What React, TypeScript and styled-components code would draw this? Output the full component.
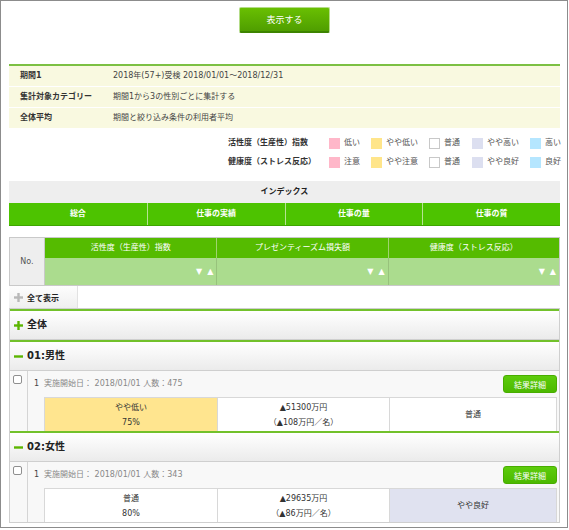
import React from "react";
import styled, { createGlobalStyle } from "styled-components";

const GlobalStyle = createGlobalStyle`
  html, body { margin: 0; padding: 0; background: #fff; }
  body {
    font-family: "DejaVu Sans", "Noto Sans CJK JP", sans-serif;
    color: #333;
  }
  * { box-sizing: border-box; }
`;

const Frame = styled.div`
  width: 568px;
  height: 528px;
  border: 1px solid #8c8c8c;
  padding: 6px 7px 0 8px;
  overflow: hidden;
  font-size: 8px;
  line-height: 1.2;
`;

const ButtonBar = styled.div`
  display: flex;
  justify-content: center;
  margin-bottom: 31px;
`;

const PrimaryButton = styled.button`
  width: 91px;
  height: 26px;
  border: 1px solid #b4dc88;
  border-bottom: 2px solid #3d8400;
  border-radius: 2px;
  background: linear-gradient(#69bf02, #4f9e00);
  color: #fff;
  font-family: inherit;
  font-size: 9px;
  padding: 0;
  cursor: pointer;
`;

const InfoTable = styled.div`
  border-top: 2px solid #7cc043;
  background: #f9f9e0;
`;

const InfoRow = styled.div`
  display: grid;
  grid-template-columns: 104px 1fr;
  align-items: center;
  height: 21px;
  border-bottom: 1px solid #fff;
  &:last-child {
    height: 20px;
    border-bottom: 0;
  }
`;

const InfoLabel = styled.div`
  padding-left: 11px;
  font-weight: bold;
  color: #333;
`;

const InfoValue = styled.div`
  color: #444;
`;

const Legend = styled.div`
  display: grid;
  grid-template-columns: 101px 42px 58px 43px 58px 30px;
  grid-auto-rows: 18px;
  row-gap: 1px;
  justify-content: end;
  align-items: center;
  margin: 6px 0 10px;
`;

const LegendTitle = styled.div`
  font-weight: bold;
  color: #333;
  white-space: nowrap;
`;

const LegendItem = styled.div`
  display: flex;
  align-items: center;
  gap: 4px;
  color: #555;
  white-space: nowrap;
`;

const Swatch = styled.span<{ $color: string; $bordered?: boolean }>`
  flex: none;
  width: 11px;
  height: 11px;
  background: ${(p) => p.$color};
  border: 1px solid ${(p) => (p.$bordered ? "#c8c8c8" : p.$color)};
`;

const IndexTitle = styled.div`
  height: 22px;
  line-height: 22px;
  background: #eeeeee;
  text-align: center;
  font-weight: bold;
  color: #222;
`;

const IndexRow = styled.div`
  display: grid;
  grid-template-columns: repeat(4, 1fr);
  height: 23px;
  background: #4dc300;
  border-bottom: 1px solid #3ea500;
`;

const IndexCell = styled.div`
  display: flex;
  align-items: center;
  justify-content: center;
  color: #fff;
  font-weight: bold;
  & + & {
    border-left: 1px solid #b6e394;
  }
`;

const FilterTable = styled.div`
  margin-top: 11px;
  display: grid;
  grid-template-columns: 35px repeat(3, 1fr);
  grid-template-rows: 20px 27px;
  border: 1px solid #c9c9c9;
`;

const NoCell = styled.div`
  grid-row: span 2;
  display: flex;
  align-items: center;
  justify-content: center;
  background: #eeeeee;
  border-right: 1px solid #c9c9c9;
  color: #555;
`;

const HeadCell = styled.div`
  display: flex;
  align-items: center;
  justify-content: center;
  background: #55bb00;
  color: #fff;
  & + & {
    border-left: 1px solid #9fd46f;
  }
`;

const SortCell = styled.div`
  display: flex;
  align-items: center;
  justify-content: flex-end;
  gap: 5px;
  padding-right: 3px;
  background: #abdc8e;
  color: #fff;
  font-size: 8px;
  & + & {
    border-left: 1px solid #98c27c;
  }
`;

const ShowAllButton = styled.button`
  display: flex;
  align-items: center;
  gap: 4px;
  width: 69px;
  height: 22px;
  margin: 0;
  padding: 0 0 0 5px;
  border: 0;
  border-right: 1px solid #e2e2e2;
  background: linear-gradient(#fdfdfd, #efefef);
  font-family: inherit;
  font-size: 8px;
  font-weight: bold;
  color: #222;
`;

const GroupList = styled.div`
  border: 1px solid #cfcfcf;
`;

const SectionHeader = styled.div`
  display: flex;
  align-items: center;
  gap: 4px;
  height: 31px;
  padding-left: 4px;
  border-top: 2px solid #72c12b;
  border-bottom: 1px solid #cfcfcf;
  background: linear-gradient(#ffffff, #ebebeb);
  font-size: 10px;
  font-weight: bold;
  color: #222;
`;

const Row = styled.div`
  display: grid;
  grid-template-columns: 18px 1fr;
  background: #f8f8f8;
`;

const CheckCol = styled.div`
  border-right: 1px solid #d5d5d5;
  padding: 4px 0 0 3px;
`;

const Checkbox = styled.span`
  display: block;
  width: 9px;
  height: 9px;
  border: 1px solid #8f8f8f;
  border-radius: 2px;
  background: #fff;
`;

const RowBody = styled.div`
  padding: 4px 2px 0 6px;
`;

const RowTop = styled.div`
  display: flex;
  align-items: center;
  height: 18px;
  margin-bottom: 4px;
`;

const RowNo = styled.span`
  width: 10px;
  color: #444;
`;

const RowMeta = styled.span`
  color: #888;
`;

const DetailButton = styled.button`
  margin-left: auto;
  width: 54px;
  height: 18px;
  padding: 0;
  border: 1px solid #48ad00;
  border-radius: 3px;
  background: linear-gradient(#5dcc0c, #4cb900);
  color: #fff;
  font-family: inherit;
  font-size: 8px;
`;

const Cells = styled.div`
  display: grid;
  grid-template-columns: 172px 172px 1fr;
  margin-left: 10px;
  border: 1px solid #d8d8d8;
  border-bottom: 0;
`;

const toneColor = {
  none: "#ffffff",
  yellow: "#ffe58f",
  lavender: "#e0e2f0",
};

const Cell = styled.div<{ $tone: keyof typeof toneColor }>`
  display: flex;
  flex-direction: column;
  align-items: center;
  justify-content: center;
  height: 33px;
  line-height: 15px;
  background: ${(p) => toneColor[p.$tone]};
  color: #333;
  & + & {
    border-left: 1px solid #d8d8d8;
  }
`;

const PlusIcon = ({ color }: { color: string }) => (
  <svg width="9" height="9" viewBox="0 0 9 9">
    <rect x="0" y="3.3" width="9" height="2.4" fill={color} />
    <rect x="3.3" y="0" width="2.4" height="9" fill={color} />
  </svg>
);

const MinusIcon = ({ color }: { color: string }) => (
  <svg width="9" height="9" viewBox="0 0 9 9">
    <rect x="0" y="3.3" width="9" height="2.4" fill={color} />
  </svg>
);

const info = [
  ["期間1", "2018年(57+)受検 2018/01/01～2018/12/31"],
  ["集計対象カテゴリー", "期間1から3の性別ごとに集計する"],
  ["全体平均", "期間と絞り込み条件の利用者平均"],
];

const swatches = [
  { color: "#ffb7c9" },
  { color: "#ffe58a" },
  { color: "#ffffff", bordered: true },
  { color: "#dcdff0" },
  { color: "#b5e6ff" },
];

const legendRows = [
  { title: "活性度（生産性）指数", labels: ["低い", "やや低い", "普通", "やや高い", "高い"] },
  { title: "健康度（ストレス反応）", labels: ["注意", "やや注意", "普通", "やや良好", "良好"] },
];

const indexCols = ["総合", "仕事の実績", "仕事の量", "仕事の質"];
const filterCols = ["活性度（生産性）指数", "プレゼンティーズム損失額", "健康度（ストレス反応）"];

type Group = {
  title: string;
  count: number;
  cells: { lines: string[]; tone: keyof typeof toneColor }[];
};

const groups: Group[] = [
  {
    title: "01:男性",
    count: 475,
    cells: [
      { lines: ["やや低い", "75%"], tone: "yellow" },
      { lines: ["▲51300万円", "（▲108万円／名）"], tone: "none" },
      { lines: ["普通"], tone: "none" },
    ],
  },
  {
    title: "02:女性",
    count: 343,
    cells: [
      { lines: ["普通", "80%"], tone: "none" },
      { lines: ["▲29635万円", "（▲86万円／名）"], tone: "none" },
      { lines: ["やや良好"], tone: "lavender" },
    ],
  },
];

export default function App() {
  return (
    <>
      <GlobalStyle />
      <Frame>
        <ButtonBar>
          <PrimaryButton>表示する</PrimaryButton>
        </ButtonBar>

        <InfoTable>
          {info.map(([label, value]) => (
            <InfoRow key={label}>
              <InfoLabel>{label}</InfoLabel>
              <InfoValue>{value}</InfoValue>
            </InfoRow>
          ))}
        </InfoTable>

        <Legend>
          {legendRows.map((row) => (
            <React.Fragment key={row.title}>
              <LegendTitle>{row.title}</LegendTitle>
              {row.labels.map((label, i) => (
                <LegendItem key={label + i}>
                  <Swatch $color={swatches[i].color} $bordered={swatches[i].bordered} />
                  {label}
                </LegendItem>
              ))}
            </React.Fragment>
          ))}
        </Legend>

        <IndexTitle>インデックス</IndexTitle>
        <IndexRow>
          {indexCols.map((c) => (
            <IndexCell key={c}>{c}</IndexCell>
          ))}
        </IndexRow>

        <FilterTable>
          <NoCell>No.</NoCell>
          {filterCols.map((c) => (
            <HeadCell key={c}>{c}</HeadCell>
          ))}
          {filterCols.map((c) => (
            <SortCell key={c + "sort"}>
              <span>▼</span>
              <span>▲</span>
            </SortCell>
          ))}
        </FilterTable>

        <ShowAllButton>
          <PlusIcon color="#b8b8b8" />
          全て表示
        </ShowAllButton>

        <GroupList>
          <SectionHeader>
            <PlusIcon color="#5cb500" />
            全体
          </SectionHeader>
          {groups.map((g) => (
            <React.Fragment key={g.title}>
              <SectionHeader>
                <MinusIcon color="#5cb500" />
                {g.title}
              </SectionHeader>
              <Row>
                <CheckCol>
                  <Checkbox />
                </CheckCol>
                <RowBody>
                  <RowTop>
                    <RowNo>1</RowNo>
                    <RowMeta>実施開始日： 2018/01/01 人数：{g.count}</RowMeta>
                    <DetailButton>結果詳細</DetailButton>
                  </RowTop>
                  <Cells>
                    {g.cells.map((c, i) => (
                      <Cell key={i} $tone={c.tone}>
                        {c.lines.map((l) => (
                          <span key={l}>{l}</span>
                        ))}
                      </Cell>
                    ))}
                  </Cells>
                </RowBody>
              </Row>
            </React.Fragment>
          ))}
        </GroupList>
      </Frame>
    </>
  );
}
